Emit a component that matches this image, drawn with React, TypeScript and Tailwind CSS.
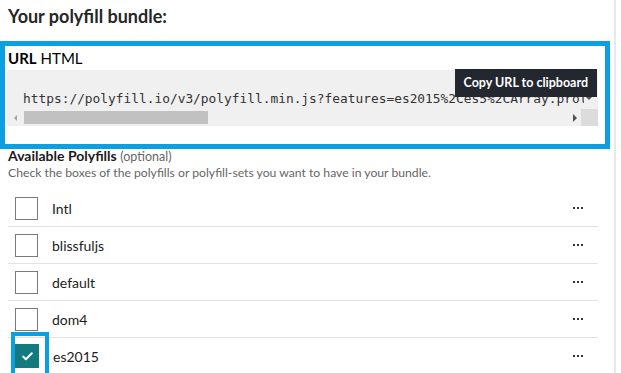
import { Check } from 'lucide-react';

const polyfills = [
  { name: 'Intl', checked: false },
  { name: 'blissfuljs', checked: false },
  { name: 'default', checked: false },
  { name: 'dom4', checked: false },
  { name: 'es2015', checked: true, focused: true },
];

const bundleUrl =
  'https://polyfill.io/v3/polyfill.min.js?features=es2015%2Ces5%2CArray.prototype.includes%2CObject.entries';

function Dots() {
  return (
    <div className="flex gap-[2px]">
      <span className="w-[2px] h-[2px] bg-[#333]" />
      <span className="w-[2px] h-[2px] bg-[#333]" />
      <span className="w-[2px] h-[2px] bg-[#333]" />
    </div>
  );
}

function PolyfillRow({ name, checked, focused }: { name: string; checked: boolean; focused?: boolean }) {
  return (
    <li className="relative flex items-center h-[37px] border-b border-[#e3e3e3] pl-[7px] pr-[15px]">
      {checked ? (
        <span className="w-[24px] h-[24px] bg-[#137a80] flex items-center justify-center">
          <Check size={13} strokeWidth={3.5} color="#fff" />
        </span>
      ) : (
        <span className="w-[23px] h-[23px] border-[1.5px] border-[#7a7a7a] bg-white" />
      )}
      {focused && (
        <span className="absolute left-[3px] top-[-6px] w-[38px] h-[48px] border-[4px] border-[#0aa0e2]" />
      )}
      <span className="ml-[14px] flex-1 text-[14px] text-[#1c1c1c]">{name}</span>
      <Dots />
    </li>
  );
}

export default function App() {
  return (
    <div className="w-[621px] h-[373px] overflow-hidden bg-white flex font-['Lato',sans-serif]">
      <div className="w-[616px] shrink-0 border-r-2 border-[#e8e8e8]">
        <h2 className="h-[41px] pl-[8px] pt-[5px] text-[18px] font-bold text-[#262626] leading-[22px]">
          Your polyfill bundle:
        </h2>

        <div className="w-[610px] h-[108px] border-[5px] border-[#0aa0e2] pl-[2px]">
          <div className="h-[24px] flex items-center pl-[1px] text-[15px] text-black">
            <span className="font-bold">URL</span>
            <span className="ml-[4px]">HTML</span>
          </div>

          <div className="relative w-[591px] h-[56px] bg-[#f0f0f0]">
            <div className="relative pt-[21px]">
              <div className="w-[583px] overflow-hidden whitespace-nowrap pl-[16px] font-['DejaVu_Sans_Mono',monospace] text-[12.85px] leading-[16px] text-[#333]">
                {bundleUrl}
              </div>
              <div className="absolute right-[4px] top-[21px] w-[10px] h-[16px] bg-[#f0f0f0] flex justify-center pt-[6px]">
                <span className="w-0 h-0 border-l-[3px] border-r-[3px] border-t-[3px] border-l-transparent border-r-transparent border-t-[#555]" />
              </div>
            </div>

            <div className="flex items-center h-[17px] mt-[2px]">
              <div className="w-[17px] flex justify-center">
                <span className="w-0 h-0 border-t-[3px] border-b-[3px] border-r-[3px] border-t-transparent border-b-transparent border-r-[#a3a3a3]" />
              </div>
              <div className="w-[184px] h-[13px] bg-[#c1c1c1]" />
              <div className="flex-1 flex justify-end pr-[4px]">
                <span className="w-0 h-0 border-t-[4px] border-b-[4px] border-l-[4px] border-t-transparent border-b-transparent border-l-[#505050]" />
              </div>
              <div className="w-[17px] h-[17px] bg-[#dcdcdc]" />
            </div>

            <div className="absolute right-[1px] top-[-1px] h-[28px] px-[9px] flex items-center bg-[#23272f] text-white text-[12.5px] font-bold">
              Copy URL to clipboard
            </div>
          </div>
        </div>

        <div className="pl-[8px] mt-[-1px]">
          <div className="leading-[15px] text-[14px] text-[#1a1a1a]">
            <span className="font-bold">Available Polyfills</span>{' '}
            <span className="text-[12.5px] text-[#666]">(optional)</span>
          </div>
          <p className="mt-[1px] text-[12.2px] leading-[16px] text-[#666]">
            Check the boxes of the polyfills or polyfill-sets you want to have in your bundle.
          </p>
        </div>

        <ul className="mt-[9px] ml-[8px] w-[590px]">
          {polyfills.map((p) => (
            <PolyfillRow key={p.name} name={p.name} checked={p.checked} focused={p.focused} />
          ))}
        </ul>
      </div>
    </div>
  );
}
